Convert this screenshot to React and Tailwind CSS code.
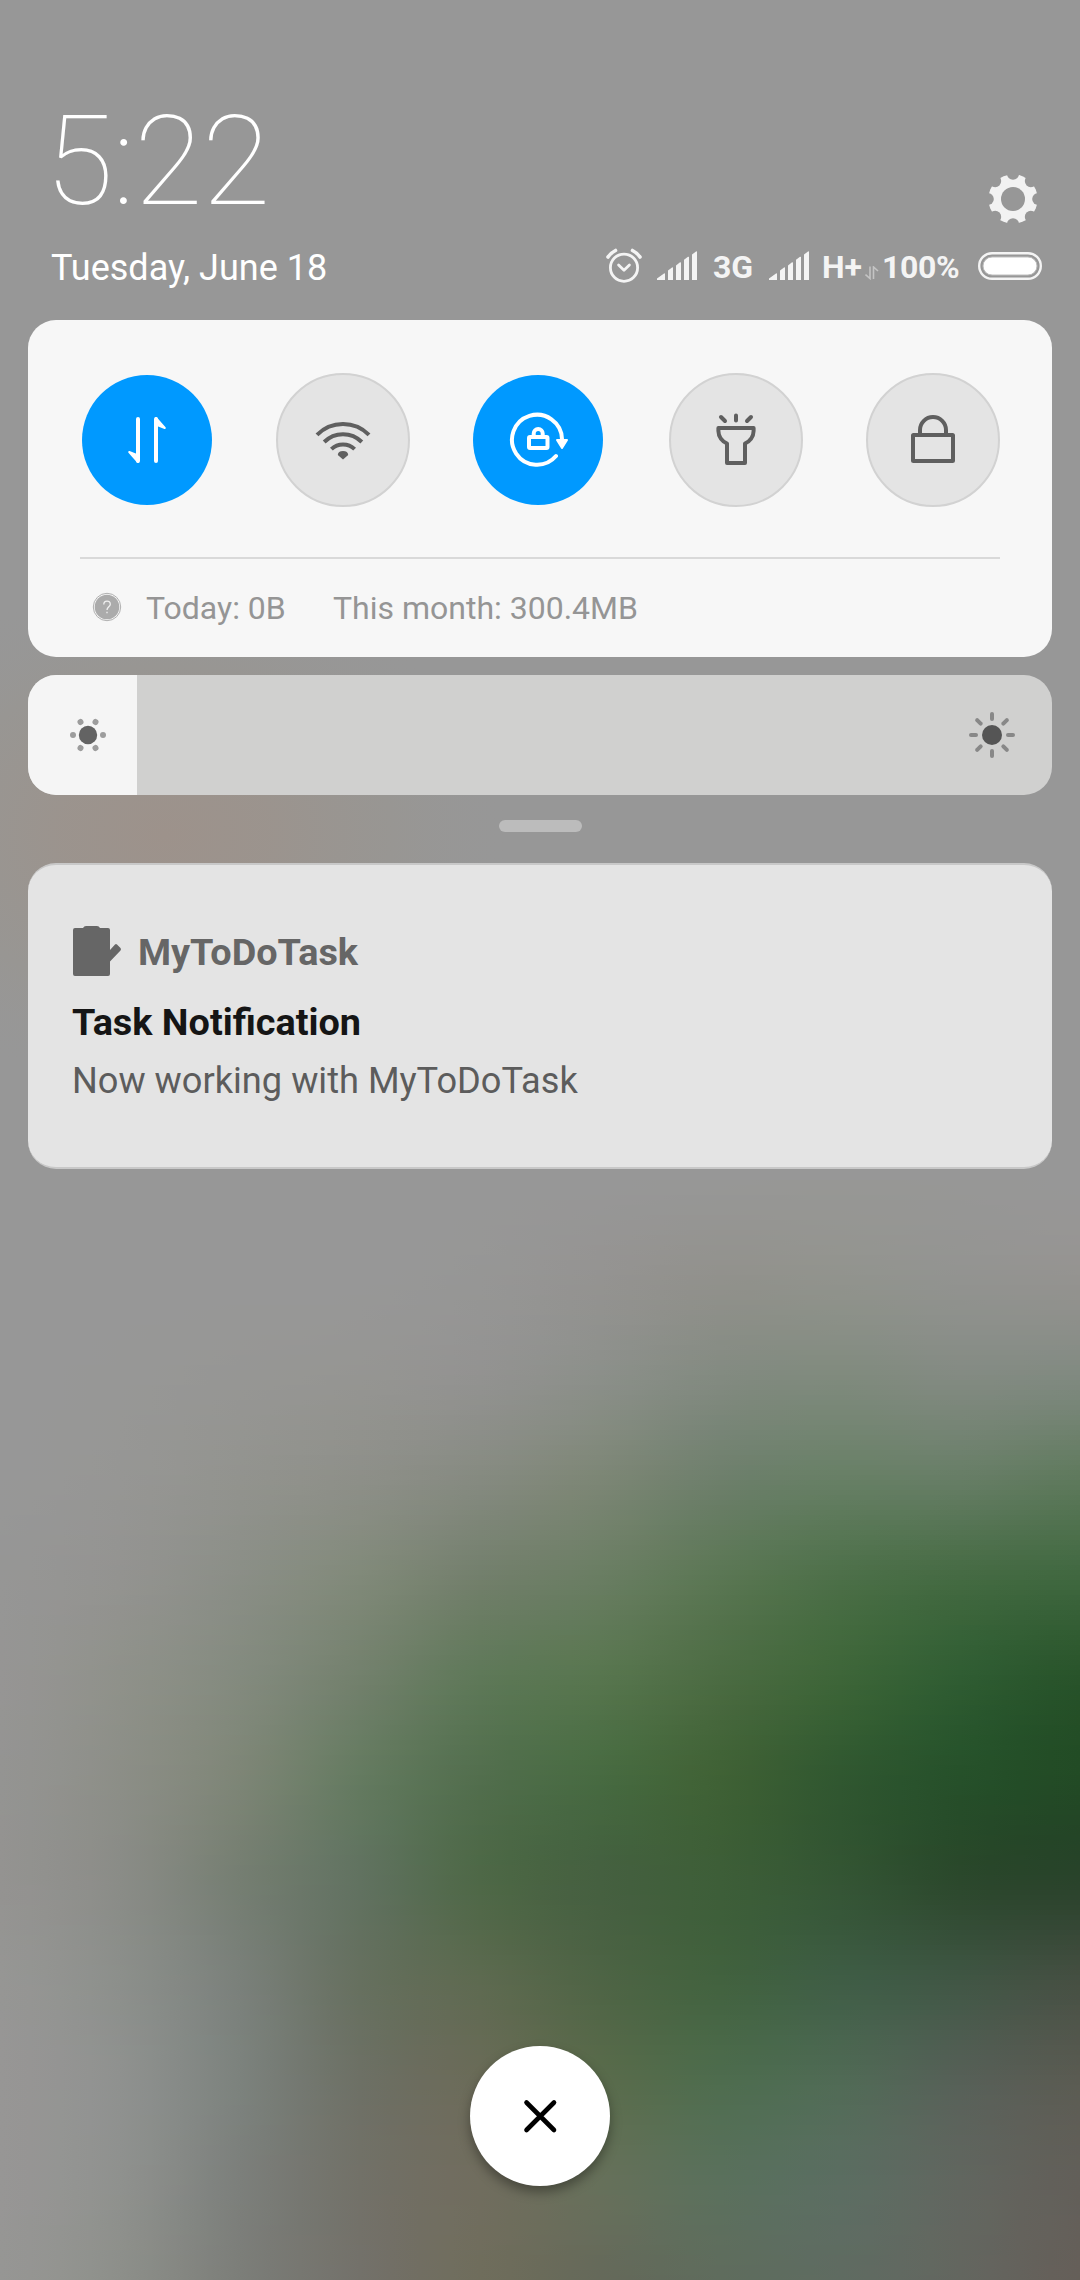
import React from "react";

const STEP_X = 120;
const TOP = 1180;
const STEP_Y = 100;

// Colour samples of the wallpaper, one row every 100px from y = 1180.
const SAMPLES = [
  "979797 979797 979797 979797 979797 979797 979796 979795 979796 979797",
  "979797 979797 979797 979797 969695 949391 91918c 91938d 929390 949390",
  "979797 979796 969694 959592 929290 8b8f89 828a80 7f8a7d 828a81 7f897f",
  "979797 969694 92938e 8d8f88 858a80 7c8675 6d7f6b 677f65 667d65 5e795c",
  "969695 939390 8a8e86 808979 727f6b 697d62 5a7653 4c6f48 446a42 3f673f",
  "969594 8f918a 838a7e 72806c 5e7858 57754e 4b6b42 3d6538 2f5c32 28532a",
  "949492 8c8e87 7d8576 647a60 526e4d 476a41 3f6135 305730 26502a 224a25",
  "949391 8a8c87 757e72 617260 4e6847 456040 3d5e38 345534 2b482c 29432b",
  "969694 8c8f8b 7a807a 66705f 5d6a50 4e6445 42623f 3f5d45 405644 454f42",
  "979695 8f918f 7c827d 6d7065 6a6b58 5a6b4c 4e6c4e 506a55 566057 5a5b52",
  "979695 8f918e 7c7f7b 727168 706d5e 66705a 5a705c 5b6d61 61665f 625f59",
  "969694 8d8f8a 7c7e79 73716a 6f6d5c 65695a 5f6c5d 5f6b61 63665f 655f59",
].map((row) =>
  row.split(" ").map((h) => [0, 2, 4].map((i) => parseInt(h.slice(i, i + 2), 16)))
);

function cubic(a, b, c, d, t) {
  return (
    b + 0.5 * t * (c - a + t * (2 * a - 5 * b + 4 * c - d + t * (3 * (b - c) + d - a)))
  );
}

function sample(list, pos) {
  const last = list.length - 1;
  const i = Math.min(Math.floor(pos), last - 1);
  const at = (k) => list[Math.max(0, Math.min(last, k))];
  return [0, 1, 2].map((c) =>
    cubic(at(i - 1)[c], at(i)[c], at(i + 1)[c], at(i + 2)[c], pos - i)
  );
}

function bandStops(y) {
  const row = SAMPLES[0].map((_, x) =>
    sample(SAMPLES.map((r) => r[x]), (y - TOP) / STEP_Y)
  );
  const stops = [];
  for (let x = 0; x <= 1080; x += STEP_X / 4) {
    const c = sample(row, x / STEP_X).map((v) => Math.round(v));
    stops.push({ o: x / 1080, c: `rgb(${c.join(",")})` });
  }
  return stops;
}

const BAND = 5;
const BANDS = Array.from({ length: 220 }, (_, i) => TOP + i * BAND);

function Wallpaper() {
  return (
    <svg className="absolute inset-0" width="1080" height="2280" viewBox="0 0 1080 2280" shapeRendering="crispEdges">
      <defs>
        <radialGradient id="warm">
          <stop offset="0" stopColor="#9d928b" />
          <stop offset="0.3" stopColor="#9c938c" stopOpacity="0.85" />
          <stop offset="0.65" stopColor="#99958f" stopOpacity="0.5" />
          <stop offset="1" stopColor="#979797" stopOpacity="0" />
        </radialGradient>
        {BANDS.map((y) => (
          <linearGradient key={y} id={`b${y}`}>
            {bandStops(y + BAND / 2).map((s) => (
              <stop key={s.o} offset={s.o} stopColor={s.c} />
            ))}
          </linearGradient>
        ))}
      </defs>
      <rect width="1080" height="2280" fill="#979797" />
      <ellipse cx="165" cy="835" rx="350" ry="260" fill="url(#warm)" />
      {BANDS.map((y) => (
        <rect key={y} y={y} width="1080" height={BAND} fill={`url(#b${y})`} />
      ))}
    </svg>
  );
}

function Gear() {
  return (
    <svg className="h-[50px] w-[50px]" viewBox="-25 -25 50 50">
      <mask id="gear">
        <circle r="24.6" fill="#fff" />
        <circle r="12" fill="#000" />
        {[0, 45, 90, 135, 180, 225, 270, 315].map((a) => (
          <circle key={a} cy="-25.3" r="6.1" fill="#000" transform={`rotate(${a})`} />
        ))}
      </mask>
      <rect x="-25" y="-25" width="50" height="50" fill="#f2f2f2" mask="url(#gear)" />
    </svg>
  );
}

function Alarm() {
  return (
    <svg className="h-9 w-9 shrink-0" viewBox="0 0 36 36" fill="none" stroke="#f4f4f4" strokeLinecap="round" strokeLinejoin="round">
      <circle cx="18" cy="19.7" r="13.6" strokeWidth="2.8" />
      <path d="M12.6 17 18 22.2 23.4 17" strokeWidth="2.8" />
      <path d="M2 9Q5 4.700 9.500 2.500M34 9Q31 4.700 26.500 2.500" strokeWidth="3.6" />
    </svg>
  );
}

function Signal() {
  return (
    <svg className="h-[30px] w-10 shrink-0" viewBox="0 0 40 30" fill="#f4f4f4">
      <path d="M0 29V27.500L7 22.500Q8 22 8 23V29ZM11 29V19.500L15 16.500Q16 16 16 17V29ZM19 29V14.500L23 11.300Q24 11 24 12V29ZM27 29V8.800L31 5.800Q32 5.300 32 6.500V29ZM35 29V3.500L39 .5Q40 0 40 1V29Z" />
    </svg>
  );
}

function Battery() {
  return (
    <svg className="h-7 w-16 shrink-0" viewBox="0 0 64 28" fill="none">
      <rect x="1.200" y="1.200" width="61.600" height="25.600" rx="12.800" stroke="#f4f4f4" strokeWidth="2.400" />
      <rect x="5" y="5" width="54" height="18" rx="9" fill="#fff" stroke="#bebebe" strokeWidth="1" />
    </svg>
  );
}

function Tile({ on, children }) {
  return (
    <div className="flex h-[134px] w-[134px] items-center justify-center">
      <div
        className={
          on
            ? "flex h-[130px] w-[130px] items-center justify-center rounded-full bg-[#0099ff]"
            : "flex h-[134px] w-[134px] items-center justify-center rounded-full border-2 border-[#d2d2d2] bg-[#e4e4e4]"
        }
      >
        <svg className="h-16 w-16" viewBox="-32 -32 64 64" fill="none" stroke={on ? "#fff" : "#5f5f5f"} strokeWidth="4" strokeLinecap="round" strokeLinejoin="round">
          {children}
        </svg>
      </div>
    </div>
  );
}

function QuickSettings() {
  return (
    <section className="mx-7 h-[337px] rounded-[28px] bg-[#f7f7f7] px-[52px] pt-[53px]">
      <div className="grid grid-cols-[196px_195px_198px_197px_134px]">
        <Tile on>
          <path d="M-9-21V21M9 21V-21" />
          <path d="M-9 22-17.800 12-9 15.500ZM9-22 17.800-12 9-15.500Z" fill="#fff" strokeWidth="2" />
        </Tile>
        <Tile>
          <g strokeLinecap="butt">
            <path d="M-26-5.200A36.500 36.500 0 0 1 26-5.200M-18.800 2A26.500 26.500 0 0 1 18.800 2M-11.600 9.200A16.500 16.500 0 0 1 11.600 9.200" />
          </g>
          <path d="M0 19.500-5.200 15Q-5 11 0 11T5.200 15Z" fill="#5f5f5f" stroke="none" />
        </Tile>
        <Tile on>
          <path d="M18 16A25 25 0 1 1 24-1" />
          <path d="M19 0H29L24 8Z" fill="#fff" strokeWidth="2" />
          <rect x="-9" y="-3" width="18.500" height="11" rx="1" />
          <path d="M-4.300-4V-6.500A4.500 4.500 0 0 1 4.700-6.500V-4" />
        </Tile>
        <Tile>
          <path d="M0-24.500V-19.500M-15-23-11-19M15-23 11-19" />
          <path d="M-17.600-12H17.600V-9C17.600-3 13.500 1.500 9 3.500V23H-9V3.500C-13.500 1.500-17.600-3-17.600-9Z" />
        </Tile>
        <Tile>
          <rect x="-20" y="-5" width="40" height="26" rx="0.500" />
          <path d="M-13-5V-10A13 13 0 0 1 13-10V-5" />
        </Tile>
      </div>
      <div className="mt-[50px] h-0.5 bg-[#d9d9d9]" />
      <div className="flex h-24 items-center pl-3 text-[32px] text-[#959595]">
        <svg className="h-[30px] w-[30px]" viewBox="0 0 30 30">
          <circle cx="15" cy="15" r="13.700" fill="none" stroke="#b0b0b0" strokeWidth="1" />
          <circle cx="15" cy="15" r="12.300" fill="#ababab" />
          <path d="M11.800 12.500C11.800 8 18.300 8 18.300 12.200 18.300 14.700 15 15 15 18M15 19.800V21.300" fill="none" stroke="#f0f0f0" strokeWidth="1.300" />
        </svg>
        <span className="ml-6 w-[187px] pt-0.5 whitespace-nowrap">Today: 0B</span>
        <span className="pt-0.5 whitespace-nowrap">This month: 300.4MB</span>
      </div>
    </section>
  );
}

function Brightness() {
  return (
    <section className="mx-7 mt-[18px] flex h-[120px] items-center overflow-hidden rounded-[28px] bg-[#d0d0cf]">
      <div className="flex h-full w-[109px] items-center bg-[#f5f5f5] pl-10">
        <svg className="h-10 w-10" viewBox="-20 -20 40 40" fill="#9d9d9d">
          <circle r="9.200" fill="#636363" />
          {[30, 90, 150, 210, 270, 330].map((a) => (
            <circle key={a} cy="-15" r="3" transform={`rotate(${a})`} />
          ))}
        </svg>
      </div>
      <svg className="mr-9 ml-auto h-12 w-12" viewBox="-24 -24 48 48" stroke="#888" strokeWidth="4" strokeLinecap="round">
        <circle r="10" fill="#555" stroke="none" />
        {[0, 45, 90, 135, 180, 225, 270, 315].map((a) => (
          <path key={a} d="M0-16V-21" transform={`rotate(${a})`} />
        ))}
      </svg>
    </section>
  );
}

function Notification() {
  return (
    <section className="mx-7 mt-[31px] h-[306px] rounded-[28px] border-y-2 border-[#c8c8c8] bg-[#e4e4e4] pt-[61px] pl-11">
      <div className="flex h-[52px] items-start">
        <svg className="ml-px h-[50px] w-[49px]" viewBox="0 0 49 50" fill="#666">
          <path d="M2 2H10Q11 0 13 0H24Q26 0 27 2H35Q37 2 37 4V24L42 18.500Q43 17.500 44 18.500L47.500 22Q48.500 23 47.500 24.500L37 35.500V48Q37 50 35 50H2Q0 50 0 48V4Q0 2 2 2Z" />
        </svg>
        <span className="ml-4 pt-0.5 text-[37.8px] leading-[48px] font-bold text-[#666]">MyToDoTask</span>
      </div>
      <div className="mt-5 text-[37.8px] leading-[48px] font-bold text-[#151515]">Task Notification</div>
      <div className="mt-[11px] text-[36.2px] leading-[48px] text-[#5c5c5c]">Now working with MyToDoTask</div>
    </section>
  );
}

export default function App() {
  return (
    <main className="relative h-[2280px] w-[1080px] overflow-hidden bg-[#979797] font-['Roboto',sans-serif]">
      <Wallpaper />
      <div className="relative flex h-full flex-col">
        <header className="h-[320px] pt-[102px] pr-[38px] pl-[51px] text-white">
          <div className="flex h-[120px] items-end justify-between">
            <div className="-ml-1.5 text-[125px] leading-[120px] font-thin tracking-[-0.7px]">5:22</div>
            <div className="mr-1 -mb-0.5">
              <Gear />
            </div>
          </div>
          <div className="mt-[26px] flex h-10 items-start justify-between">
            <div className="text-[36px] leading-10">Tuesday, June 18</div>
            <div className="-mt-0.5 flex h-10 items-center text-[32px] leading-10 font-bold whitespace-nowrap text-[#f4f4f4]">
              <Alarm />
              <div className="ml-[15px]">
                <Signal />
              </div>
              <span className="ml-4 w-14 pt-0.5">3G</span>
              <Signal />
              <span className="ml-[13px] w-[43px] pt-0.5">H+</span>
              <svg className="mt-3.5 h-3.5 w-3.5 shrink-0" viewBox="0 0 14 14" fill="none" stroke="#c4c4c4" strokeWidth="1.600">
                <path d="M5 .5V12.500L.5 8.500M8.500 13V1L13 5" />
              </svg>
              <span className="ml-[3px] w-24 pt-0.5 tracking-[-0.4px]">100%</span>
              <Battery />
            </div>
          </div>
        </header>
        <QuickSettings />
        <Brightness />
        <div className="mx-auto mt-[25px] h-3 w-[83px] rounded-full bg-[#bcbcbc]" />
        <Notification />
        <button aria-label="Clear all" className="mx-auto mt-auto mb-[94px] flex h-[140px] w-[140px] items-center justify-center rounded-full bg-white shadow-[0_6px_12px_rgba(0,0,0,0.35)]">
          <svg className="h-10 w-10" viewBox="0 0 40 40" stroke="#000" strokeWidth="4.600" strokeLinecap="round">
            <path d="M6.500 6.500 34 34M34 6.500 6.500 34" />
          </svg>
        </button>
      </div>
    </main>
  );
}
